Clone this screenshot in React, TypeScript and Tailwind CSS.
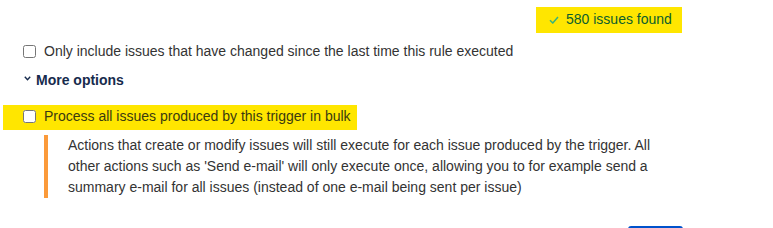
import React from "react";

export default function App() {
  const font = { fontFamily: '"Liberation Sans", Arial, sans-serif' };
  return (
    <div className="w-[773px] h-[228px] bg-white overflow-hidden text-[14px] text-[#333333]" style={font}>
      <div className="ml-[536px] mt-[7px] w-[146px] h-[26px] bg-[#ffe600] flex items-center">
        <svg width="10" height="8" viewBox="0 0 10 8" className="ml-[13px]">
          <path d="M1 4.2 L3.8 7 L9 1" fill="none" stroke="#36b37e" strokeWidth="1.5" />
        </svg>
        <span className="ml-[7px] text-[#0b5e2e] leading-[20px] -mt-[3px]">580 issues found</span>
      </div>

      <div className="mt-[8px] h-[20px] flex items-center">
        <input type="checkbox" className="m-0 ml-[23px] w-[13px] h-[13px]" />
        <span className="ml-[8px] leading-[20px]">Only include issues that have changed since the last time this rule executed</span>
      </div>

      <div className="mt-[9px] h-[20px] flex items-center">
        <svg width="7" height="5" viewBox="0 0 7 5" className="ml-[24px] -mt-[3px]">
          <path d="M0.8 0.8 L3.5 3.8 L6.2 0.8" fill="none" stroke="#172b4d" strokeWidth="1.4" />
        </svg>
        <span className="ml-[5px] font-bold text-[#172b4d] leading-[20px]">More options</span>
      </div>

      <div className="mt-[15px] ml-[3px] w-[354px] h-[25px] bg-[#ffe600] flex items-center">
        <input type="checkbox" className="m-0 ml-[20px] w-[13px] h-[13px] -mt-[3px]" />
        <span className="ml-[8px] leading-[20px] text-[#3a3a10] -mt-[3px]">Process all issues produced by this trigger in bulk</span>
      </div>

      <div className="mt-[5px] ml-[44px] border-l-4 border-[#fb9a3a] pl-[20px] w-[629px]">
        <p className="leading-[21px] w-[605px] text-[#333333]">
          Actions that create or modify issues will still execute for each issue produced by the trigger. All other actions such as 'Send e-mail' will only execute once, allowing you to for example send a summary e-mail for all issues (instead of one e-mail being sent per issue)
        </p>
      </div>

      <div className="mt-[28px] ml-[628px] w-[55px] h-[8px] rounded-[3px] bg-[#0052cc]" />
    </div>
  );
}
